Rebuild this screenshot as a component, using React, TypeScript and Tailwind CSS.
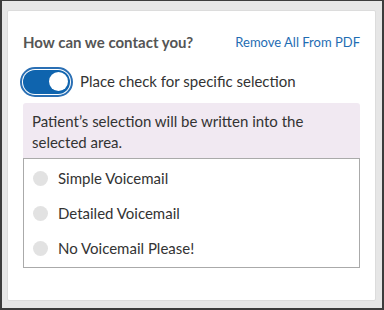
export default function App() {
  const options = ["Simple Voicemail", "Detailed Voicemail", "No Voicemail Please!"];
  return (
    <div
      className="h-[310px] w-[384px] border-l-2 border-r-2 border-t border-b-2 border-[#3c3c3c] bg-[#e6e6e6] pl-[5px] pr-[6px] pt-[9px] pb-[7px]"
      style={{ fontFamily: "Lato, 'Open Sans', sans-serif" }}
    >
      <div className="h-full rounded-[2px] border border-[#dcdcdc] bg-white px-[15px] pt-[20px]">
        <div className="flex items-center justify-between">
          <h2 className="text-[15px] font-bold text-[#555]">How can we contact you?</h2>
          <button className="text-[13px] text-[#1f6db3]">Remove All From PDF</button>
        </div>
        <div className="ml-[-3px] mt-[13px] flex items-center gap-[7px]">
          <span className="flex h-[30px] w-[53px] items-center rounded-full border-2 border-[#2a6fb4] p-[1px]">
            <span className="flex h-full w-full items-center justify-end rounded-full bg-[#0f64ae] pr-[2px]">
              <span className="h-[19px] w-[19px] rounded-full bg-white" />
            </span>
          </span>
          <span className="text-[15px] text-[#333]">Place check for specific selection</span>
        </div>
        <div className="mt-[6px] rounded-t-[3px] bg-[#f1e9f2] px-[9px] pt-[8px] pb-[5px] text-[15px] leading-[21px] text-[#333]">
          Patient’s selection will be written into the selected area.
        </div>
        <div className="border border-[#aaa] px-[9px] pt-[2px] pb-[1px]">
          {options.map((o) => (
            <div key={o} className="flex h-[35px] items-center gap-[10px]">
              <span className="h-[15px] w-[15px] rounded-full bg-[#e2e2e2]" />
              <span className="text-[15px] text-[#333]">{o}</span>
            </div>
          ))}
        </div>
      </div>
    </div>
  );
}
